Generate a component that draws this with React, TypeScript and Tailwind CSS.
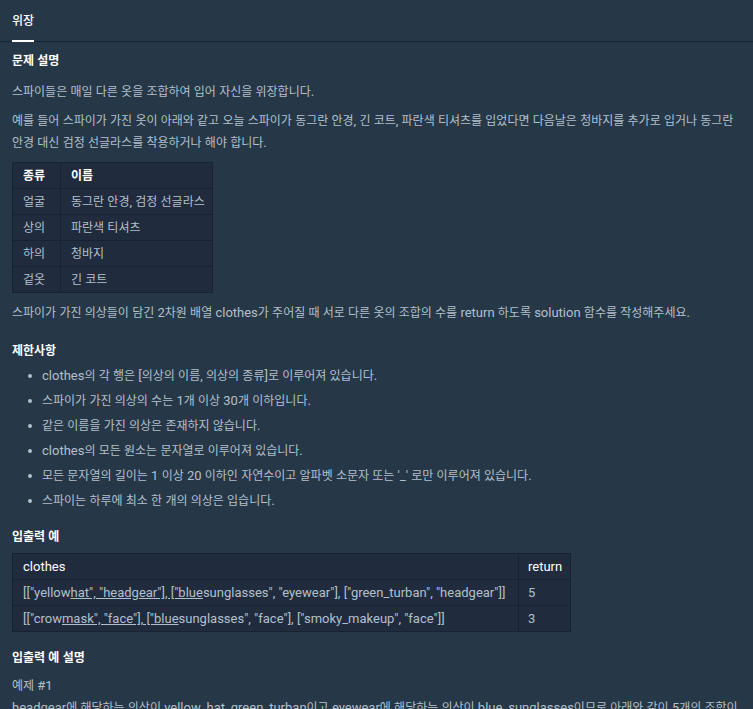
import React from "react";

const font = { fontFamily: 'Roboto, "Noto Sans CJK KR", sans-serif' };

function K({ t }: { t: string }) {
  const parts = t.split(/([\uAC00-\uD7A3\u3131-\u318E]+)/);
  return (
    <>
      {parts.map((p, i) =>
        /[\uAC00-\uD7A3\u3131-\u318E]/.test(p) ? (
          <span key={i} className="text-[12px] leading-none" style={{ fontFamily: '"Noto Sans CJK KR", sans-serif' }}>
            {p}
          </span>
        ) : (
          <React.Fragment key={i}>{p}</React.Fragment>
        )
      )}
    </>
  );
}

function Bullet({ t }: { t: string }) {
  return (
    <li className="flex items-center h-[22px] mt-[3px]">
      <span className="w-[30px] flex justify-end pr-[10px] shrink-0">
        <span className="block w-[4px] h-[4px] rounded-full bg-[#b2c0cc]" />
      </span>
      <span className="whitespace-nowrap">
        <K t={t} />
      </span>
    </li>
  );
}

export default function App() {
  return (
    <div className="min-h-[709px] w-full bg-[#263747] text-[#b2c0cc] text-[13px] leading-[22px]" style={font}>
      <div className="flex h-[42px] border-b border-[#172334] px-[12px]">
        <div className="h-[42px] -mb-px border-b-2 border-white text-white font-medium flex items-center">
          <K t="위장" />
        </div>
      </div>
      <div className="px-[12px]">
        <h2 className="text-white font-bold leading-[20px] mt-[9px]">
          <K t="문제 설명" />
        </h2>
        <p className="mt-[10px]">
          <K t="스파이들은 매일 다른 옷을 조합하여 입어 자신을 위장합니다." />
        </p>
        <p className="mt-[7px]">
          <K t="예를 들어 스파이가 가진 옷이 아래와 같고 오늘 스파이가 동그란 안경, 긴 코트, 파란색 티셔츠를 입었다면 다음날은 청바지를 추가로 입거나 동그란 안경 대신 검정 선글라스를 착용하거나 해야 합니다." />
        </p>
        <table className="mt-[8px] border-collapse bg-[#202b3d]">
          <thead>
            <tr className="h-[26px]">
              <th className="w-[48px] border border-[#172334] px-[10px] text-left text-white font-bold whitespace-nowrap">
                <K t="종류" />
              </th>
              <th className="w-[152px] border border-[#172334] pl-[10px] pr-[7px] text-left text-white font-bold whitespace-nowrap">
                <K t="이름" />
              </th>
            </tr>
          </thead>
          <tbody>
            {[
              ["얼굴", "동그란 안경, 검정 선글라스"],
              ["상의", "파란색 티셔츠"],
              ["하의", "청바지"],
              ["겉옷", "긴 코트"],
            ].map(([a, b]) => (
              <tr key={a} className="h-[26px]">
                <td className="border border-[#172334] px-[10px] whitespace-nowrap">
                  <K t={a} />
                </td>
                <td className="border border-[#172334] pl-[10px] pr-[7px] whitespace-nowrap">
                  <K t={b} />
                </td>
              </tr>
            ))}
          </tbody>
        </table>
        <p className="mt-[9px]">
          <K t="스파이가 가진 의상들이 담긴 2차원 배열 clothes가 주어질 때 서로 다른 옷의 조합의 수를 return 하도록 solution 함수를 작성해주세요." />
        </p>
        <h2 className="text-white font-bold leading-[20px] mt-[17px]">
          <K t="제한사항" />
        </h2>
        <ul className="mt-[4px]">
          <Bullet t="clothes의 각 행은 [의상의 이름, 의상의 종류]로 이루어져 있습니다." />
          <Bullet t="스파이가 가진 의상의 수는 1개 이상 30개 이하입니다." />
          <Bullet t="같은 이름을 가진 의상은 존재하지 않습니다." />
          <Bullet t="clothes의 모든 원소는 문자열로 이루어져 있습니다." />
          <Bullet t="모든 문자열의 길이는 1 이상 20 이하인 자연수이고 알파벳 소문자 또는 '_' 로만 이루어져 있습니다." />
          <Bullet t="스파이는 하루에 최소 한 개의 의상은 입습니다." />
        </ul>
        <h2 className="text-white font-bold leading-[20px] mt-[15px]">
          <K t="입출력 예" />
        </h2>
        <table className="mt-[6px] border-collapse bg-[#202b3d]">
          <thead>
            <tr className="h-[26px]">
              <th className="w-[506px] border border-[#172334] px-[10px] text-left text-white font-normal">clothes</th>
              <th className="w-[52px] border border-[#172334] pl-[9px] pr-[8px] text-left text-white font-normal">return</th>
            </tr>
          </thead>
          <tbody>
            <tr className="h-[26px]">
              <td className="border border-[#172334] px-[10px] whitespace-nowrap">
                [["yellow<span className="underline">hat", "headgear"], ["blue</span>sunglasses", "eyewear"], ["green_turban", "headgear"]]
              </td>
              <td className="border border-[#172334] pl-[9px] pr-[8px]">5</td>
            </tr>
            <tr className="h-[26px]">
              <td className="border border-[#172334] px-[10px] whitespace-nowrap">
                [["crow<span className="underline">mask", "face"], ["blue</span>sunglasses", "face"], ["smoky_makeup", "face"]]
              </td>
              <td className="border border-[#172334] pl-[9px] pr-[8px]">3</td>
            </tr>
          </tbody>
        </table>
        <h2 className="text-white font-bold leading-[20px] mt-[16px]">
          <K t="입출력 예 설명" />
        </h2>
        <p className="mt-[7px]">
          <K t="예제 #1" />
        </p>
        <p>
          <K t="headgear에 해당하는 의상이 yellow_hat, green_turban이고 eyewear에 해당하는 의상이 blue_sunglasses이므로 아래와 같이 5개의 조합이 가능합니다." />
        </p>
      </div>
    </div>
  );
}
